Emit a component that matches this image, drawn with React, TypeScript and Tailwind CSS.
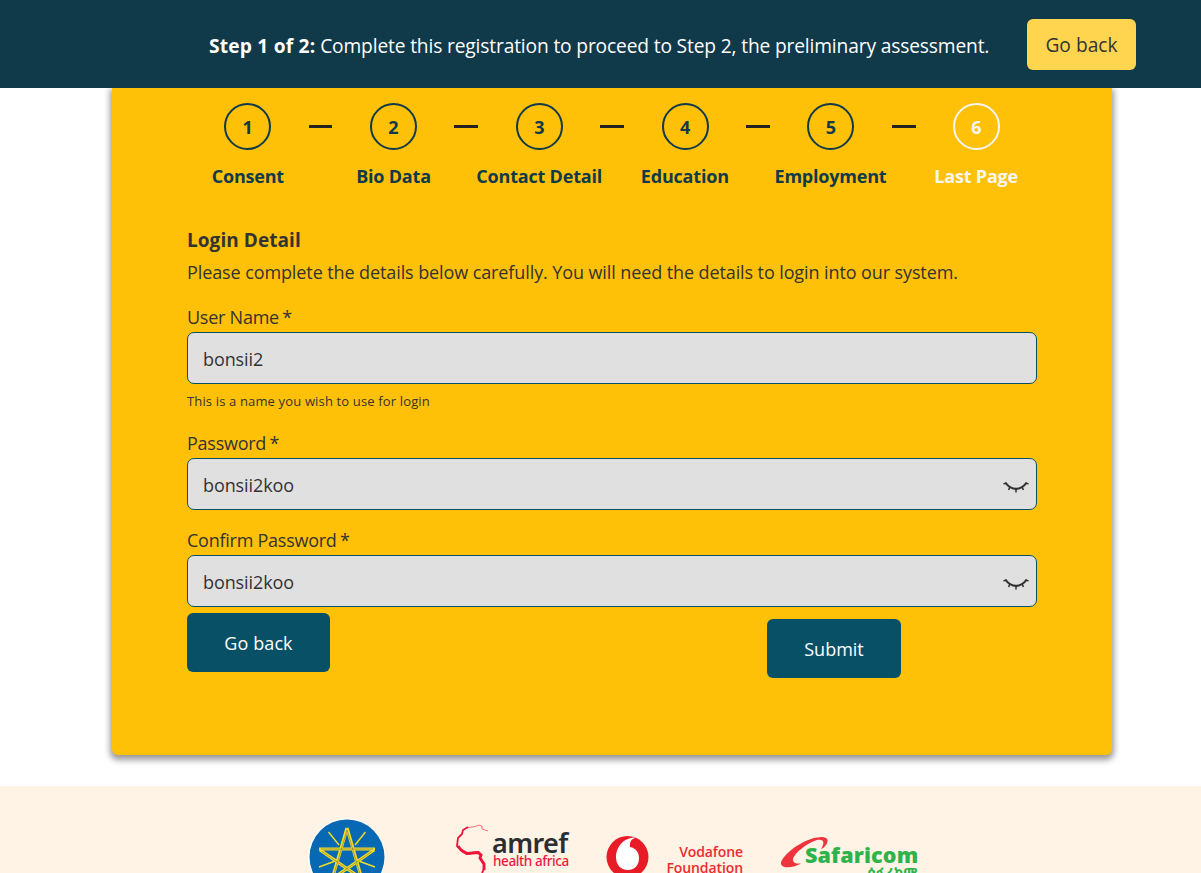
import React from "react";

const steps = ["Consent", "Bio Data", "Contact Detail", "Education", "Employment", "Last Page"];

function ClosedEye() {
  return (
    <svg width="26" height="12" viewBox="0 0 26 12" fill="none" stroke="#333" className="shrink-0">
      <path d="M2.5 1.8C6 6.3 9 7.9 13 7.9s7-1.6 10.5-6.1" strokeWidth="2.1" />
      <path d="M0.5 3.2L3.4 1.6M25.5 3.2L22.6 1.6M7 5.6L5.6 9M19 5.600l1.400 3.400M13 7.9v3.600" strokeWidth="1.5" />
    </svg>
  );
}

function Field({ label, value, secret = false }: { label: string; value: string; secret?: boolean }) {
  return (
    <div>
      <div className="h-[30px] text-[18px] leading-[30px] tracking-[-0.25px]">
        {label}
        <span className="-ml-px"> *</span>
      </div>
      <div className="flex h-[52px] items-center justify-between rounded-[7px] border border-[#085066] bg-[#e0e0e0] pl-[15px] pr-[7px]">
        <span className="pt-[3px] text-[18px] leading-[27px] tracking-[-0.1px]">{value}</span>
        {secret && <span className="pt-[6px]"><ClosedEye /></span>}
      </div>
    </div>
  );
}

function Emblem() {
  return (
    <svg width="80" height="56" viewBox="0 0 80 56" className="block">
      <circle cx="39.500" cy="40" r="39" fill="#fffaf4" />
      <circle cx="40" cy="40" r="37.5" fill="#0768b3" />
      <g stroke="#f3dc27" fill="none">
        <path d="M40 11L56 66M40 11L24 66M12 32H68M13 33L58 64M67 33L22 64" strokeWidth="3.200" />
        <path d="M21.5 15L32 28M58.500 15L48 28M12 50L27 44.500M68 50L53 44.500" strokeWidth="1.4" />
      </g>
      <path d="M40 13L55 64M40 13L25 64M14 32H66M15 34.500L58 64M65 34.500L22 64" stroke="#857f48" strokeWidth="0.7" fill="none" />
    </svg>
  );
}

function Africa() {
  return (
    <svg width="34" height="50" viewBox="0 0 34 50" fill="none" stroke="#f0133c" className="block">
      <path d="M12 4Q16 3 20 2.500Q24 0 27 2V5L33 7" strokeWidth=".6" />
      <path d="M13 3L8 6L7 10L3 14L2 22L6 26L8 28L12 30L19 28.500H24L26 31L25 34L29 40V45L27 49" strokeWidth="1.800" />
      <path d="M3 22L6 26L12 29.500L23 28.500L26 31L25 34L29 40V46" strokeWidth="2.900" />
    </svg>
  );
}

export default function App() {
  return (
    <div className="h-[873px] overflow-hidden bg-white font-['Open_Sans','Noto_Sans',sans-serif] text-[#333]">
      <header className="relative z-10 flex h-[88px] items-start bg-[#10394a] pl-[209px]">
        <div className="mt-[32px] w-[818px] whitespace-nowrap text-[19.2px] leading-[28px] text-white">
          <b className="tracking-[0.19px]">Step 1 of 2:</b>
          <span className="tracking-[-0.15px]"> Complete this registration to proceed to Step 2, the preliminary assessment.</span>
        </div>
        <button className="mt-[19px] h-[51px] w-[109px] rounded-[6px] bg-[#ffd54f] pt-[2px] text-[19.2px]">Go back</button>
      </header>

      <main className="ml-[112px] h-[667px] w-[1000px] rounded-b-[6px] bg-[#ffc107] pt-[15px] shadow-[0_3px_6px_2px_rgba(0,0,0,0.4)]">
        <div className="ml-[112.2px] flex w-[775.4px] items-center justify-between">
          {steps.map((s, i) => (
            <React.Fragment key={s}>
              {i > 0 && <span className="h-[3px] w-[23.8px] bg-[#222]" />}
              <span className={`flex h-[47px] items-center justify-center rounded-full border-2 pt-[2px] text-[18px] font-bold ${i === 5 ? "w-[46.4px] border-[#f5f5f5] text-[#f5f5f5]" : "w-[47px] border-[#10394a] text-[#10394a]"}`}>{i + 1}</span>
            </React.Fragment>
          ))}
        </div>
        <div className="ml-[63px] mt-[12px] grid w-[874px] grid-cols-6 text-center text-[18px] font-bold leading-[28px]">
          {steps.map((s, i) => (
            <span key={s} className={`whitespace-nowrap tracking-[-0.2px] ${i === 5 ? "text-[#f5f5f5]" : "text-[#10394a]"}`}>{s}</span>
          ))}
        </div>

        <div className="ml-[75px] mt-[36px] w-[850px]">
          <h2 className="text-[19px] font-bold leading-[28px] tracking-[0.06px]">Login Detail</h2>
          <p className="mt-[4px] whitespace-nowrap text-[18px] leading-[28px] tracking-[-0.1px]">
            Please complete the details below carefully. You will need the details to login into our system.
          </p>
          <div className="mt-[16px]">
            <Field label="User Name" value="bonsii2" />
            <p className="mt-[7px] text-[13px] leading-[20px] tracking-[0.15px]">This is a name you wish to use for login</p>
          </div>
          <div className="mt-[17px]"><Field label="Password" value="bonsii2koo" secret /></div>
          <div className="mt-[14.5px] pb-[0.5px]"><Field label="Confirm Password" value="bonsii2koo" secret /></div>
          <div className="flex pt-[6px] text-[18px] text-white">
            <button className="h-[59px] w-[143px] rounded-[6px] bg-[#085066] pt-[2px] tracking-[0.1px]">Go back</button>
            <button className="ml-[437px] mt-[6px] h-[59px] w-[134px] rounded-[6px] bg-[#085066] pt-[2px]">Submit</button>
          </div>
        </div>
      </main>

      <footer className="mt-[31px] flex h-[87px] items-start overflow-hidden bg-[#fff3e5]">
        <div className="ml-[307px] mt-[31px] w-[148px]"><Emblem /></div>
        <div className="mt-[38px] flex w-[151px]">
          <Africa />
          <div className="ml-[3px] mt-[5px] whitespace-nowrap">
            <div className="font-['Noto_Sans',sans-serif] text-[27px] font-semibold leading-[28px] tracking-[-0.6px] text-[#2b2f32]">amref</div>
            <div className="-mt-[3px] pl-px font-['Noto_Sans',sans-serif] text-[13.5px] font-medium leading-[14px] tracking-[-0.4px] text-[#ed1944]">health africa</div>
          </div>
        </div>
        <svg width="44" height="44" viewBox="0 0 44 44" className="mt-[50px] block">
          <circle cx="21.500" cy="21" r="21" fill="#e81c27" />
          <path d="M30 1.500C25 3 23.500 6 24 11C30 12 33 17 33 22C33 30 28 34 22 34C14 34 10 28 10 21C10 11 18 1 30 1.500Z" fill="#fff" />
        </svg>
        <div className="ml-[16px] mt-[58px] w-[77px] whitespace-nowrap text-right text-[14px] font-semibold leading-[16px] tracking-[-0.1px] text-[#ec2b32]">
          <div>Vodafone</div><div>Foundation</div>
        </div>
        <div className="ml-[37px] mt-[51px] flex">
          <svg width="50" height="32" viewBox="0 0 50 32" className="block shrink-0">
            <path d="M21 26.500C14 31 2 32 1 27C0 20 22 1 41 0Q51 0 46 8Q44 11 41 12C45 5 44 2 37 3C27 6 13 17 13 23C13 26 17 27 21 26.500Z" fill="#ef343e" />
          </svg>
          <div className="-ml-[25px] mt-[6px] whitespace-nowrap text-[#2db34a]">
            <div className="text-[21.5px] font-extrabold leading-[24px] tracking-[0.15px]">Safaricom</div>
            <div className="-mt-px pl-[62px] font-['Noto_Sans_Ethiopic','Noto_Sans',sans-serif] text-[14px] font-bold leading-[14px]">ሳፋሪኮም</div>
          </div>
        </div>
      </footer>
    </div>
  );
}
